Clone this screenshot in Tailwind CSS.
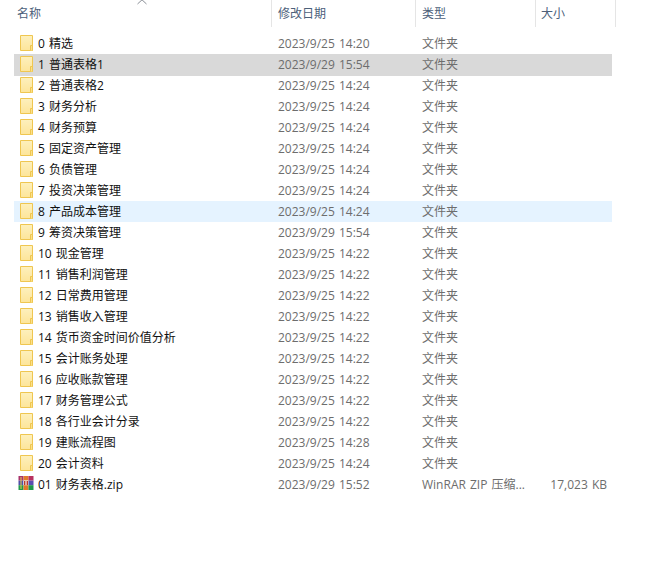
<!DOCTYPE html>
<html><head><meta charset="utf-8"><script src="https://cdn.jsdelivr.net/npm/@tailwindcss/browser@4"></script></head>
<body class="bg-white">
<div class="relative w-[672px] h-[570px] overflow-hidden bg-white text-[12px] [word-spacing:1px] font-['Open_Sans','Noto_Sans_CJK_SC',sans-serif]">
<svg class="absolute left-[137px] top-[-1px]" width="10" height="6" viewBox="0 0 10 6"><path d="M0.5 5 L5 0.8 L9.5 5" fill="none" stroke="#8a8f96" stroke-width="1"/></svg>
<div class="flex h-[27px] text-[#4c607a] leading-[27px]">
<div class="w-[272px] pl-[17px] border-r border-[#e5e5e5]">名称</div>
<div class="w-[144px] pl-[6px] border-r border-[#e5e5e5]">修改日期</div>
<div class="w-[120px] pl-[6px] border-r border-[#e5e5e5]">类型</div>
<div class="w-[80px] pl-[5px] border-r border-[#e5e5e5]">大小</div>
</div>
<svg width="0" height="0" class="absolute"><defs>
<linearGradient id="fg" x1="0" y1="0" x2="0" y2="1"><stop offset="0" stop-color="#fdf0bd"/><stop offset="1" stop-color="#fde59a"/></linearGradient>
<symbol id="folder" viewBox="0 0 16 16"><path d="M2.5 0.5H14.5V15.5H2.5Z" fill="url(#fg)" stroke="#efc650"/><path d="M12.5 15.5V10.5H14.5V15.5" fill="#fbe08a" stroke="#efc650"/></symbol>
</defs></svg>
<div class="pt-[6px] ml-[14px] w-[598px] flex flex-col text-[#6d6d6d]">
<div class="flex h-[21px] items-center"><div class="w-[264px] pl-[4px] flex items-center text-[#111]"><svg class="shrink-0 mr-[4px] mb-[1px]" width="16" height="16"><use href="#folder"/></svg><span>0 精选</span></div><div class="w-[144px]">2023/9/25 14:20</div><div>文件夹</div></div>
<div class="flex h-[22px] mb-[-1px] pb-[1px] items-center bg-[#d9d9d9]"><div class="w-[264px] pl-[4px] flex items-center text-[#111]"><svg class="shrink-0 mr-[4px] mb-[1px]" width="16" height="16"><use href="#folder"/></svg><span>1 普通表格1</span></div><div class="w-[144px]">2023/9/29 15:54</div><div>文件夹</div></div>
<div class="flex h-[21px] items-center"><div class="w-[264px] pl-[4px] flex items-center text-[#111]"><svg class="shrink-0 mr-[4px] mb-[1px]" width="16" height="16"><use href="#folder"/></svg><span>2 普通表格2</span></div><div class="w-[144px]">2023/9/25 14:24</div><div>文件夹</div></div>
<div class="flex h-[21px] items-center"><div class="w-[264px] pl-[4px] flex items-center text-[#111]"><svg class="shrink-0 mr-[4px] mb-[1px]" width="16" height="16"><use href="#folder"/></svg><span>3 财务分析</span></div><div class="w-[144px]">2023/9/25 14:24</div><div>文件夹</div></div>
<div class="flex h-[21px] items-center"><div class="w-[264px] pl-[4px] flex items-center text-[#111]"><svg class="shrink-0 mr-[4px] mb-[1px]" width="16" height="16"><use href="#folder"/></svg><span>4 财务预算</span></div><div class="w-[144px]">2023/9/25 14:24</div><div>文件夹</div></div>
<div class="flex h-[21px] items-center"><div class="w-[264px] pl-[4px] flex items-center text-[#111]"><svg class="shrink-0 mr-[4px] mb-[1px]" width="16" height="16"><use href="#folder"/></svg><span>5 固定资产管理</span></div><div class="w-[144px]">2023/9/25 14:24</div><div>文件夹</div></div>
<div class="flex h-[21px] items-center"><div class="w-[264px] pl-[4px] flex items-center text-[#111]"><svg class="shrink-0 mr-[4px] mb-[1px]" width="16" height="16"><use href="#folder"/></svg><span>6 负债管理</span></div><div class="w-[144px]">2023/9/25 14:24</div><div>文件夹</div></div>
<div class="flex h-[21px] items-center"><div class="w-[264px] pl-[4px] flex items-center text-[#111]"><svg class="shrink-0 mr-[4px] mb-[1px]" width="16" height="16"><use href="#folder"/></svg><span>7 投资决策管理</span></div><div class="w-[144px]">2023/9/25 14:24</div><div>文件夹</div></div>
<div class="flex h-[21px] items-center bg-[#e5f3ff]"><div class="w-[264px] pl-[4px] flex items-center text-[#111]"><svg class="shrink-0 mr-[4px] mb-[1px]" width="16" height="16"><use href="#folder"/></svg><span>8 产品成本管理</span></div><div class="w-[144px]">2023/9/25 14:24</div><div>文件夹</div></div>
<div class="flex h-[21px] items-center"><div class="w-[264px] pl-[4px] flex items-center text-[#111]"><svg class="shrink-0 mr-[4px] mb-[1px]" width="16" height="16"><use href="#folder"/></svg><span>9 筹资决策管理</span></div><div class="w-[144px]">2023/9/29 15:54</div><div>文件夹</div></div>
<div class="flex h-[21px] items-center"><div class="w-[264px] pl-[4px] flex items-center text-[#111]"><svg class="shrink-0 mr-[4px] mb-[1px]" width="16" height="16"><use href="#folder"/></svg><span>10 现金管理</span></div><div class="w-[144px]">2023/9/25 14:22</div><div>文件夹</div></div>
<div class="flex h-[21px] items-center"><div class="w-[264px] pl-[4px] flex items-center text-[#111]"><svg class="shrink-0 mr-[4px] mb-[1px]" width="16" height="16"><use href="#folder"/></svg><span>11 销售利润管理</span></div><div class="w-[144px]">2023/9/25 14:22</div><div>文件夹</div></div>
<div class="flex h-[21px] items-center"><div class="w-[264px] pl-[4px] flex items-center text-[#111]"><svg class="shrink-0 mr-[4px] mb-[1px]" width="16" height="16"><use href="#folder"/></svg><span>12 日常费用管理</span></div><div class="w-[144px]">2023/9/25 14:22</div><div>文件夹</div></div>
<div class="flex h-[21px] items-center"><div class="w-[264px] pl-[4px] flex items-center text-[#111]"><svg class="shrink-0 mr-[4px] mb-[1px]" width="16" height="16"><use href="#folder"/></svg><span>13 销售收入管理</span></div><div class="w-[144px]">2023/9/25 14:22</div><div>文件夹</div></div>
<div class="flex h-[21px] items-center"><div class="w-[264px] pl-[4px] flex items-center text-[#111]"><svg class="shrink-0 mr-[4px] mb-[1px]" width="16" height="16"><use href="#folder"/></svg><span>14 货币资金时间价值分析</span></div><div class="w-[144px]">2023/9/25 14:22</div><div>文件夹</div></div>
<div class="flex h-[21px] items-center"><div class="w-[264px] pl-[4px] flex items-center text-[#111]"><svg class="shrink-0 mr-[4px] mb-[1px]" width="16" height="16"><use href="#folder"/></svg><span>15 会计账务处理</span></div><div class="w-[144px]">2023/9/25 14:22</div><div>文件夹</div></div>
<div class="flex h-[21px] items-center"><div class="w-[264px] pl-[4px] flex items-center text-[#111]"><svg class="shrink-0 mr-[4px] mb-[1px]" width="16" height="16"><use href="#folder"/></svg><span>16 应收账款管理</span></div><div class="w-[144px]">2023/9/25 14:22</div><div>文件夹</div></div>
<div class="flex h-[21px] items-center"><div class="w-[264px] pl-[4px] flex items-center text-[#111]"><svg class="shrink-0 mr-[4px] mb-[1px]" width="16" height="16"><use href="#folder"/></svg><span>17 财务管理公式</span></div><div class="w-[144px]">2023/9/25 14:22</div><div>文件夹</div></div>
<div class="flex h-[21px] items-center"><div class="w-[264px] pl-[4px] flex items-center text-[#111]"><svg class="shrink-0 mr-[4px] mb-[1px]" width="16" height="16"><use href="#folder"/></svg><span>18 各行业会计分录</span></div><div class="w-[144px]">2023/9/25 14:22</div><div>文件夹</div></div>
<div class="flex h-[21px] items-center"><div class="w-[264px] pl-[4px] flex items-center text-[#111]"><svg class="shrink-0 mr-[4px] mb-[1px]" width="16" height="16"><use href="#folder"/></svg><span>19 建账流程图</span></div><div class="w-[144px]">2023/9/25 14:28</div><div>文件夹</div></div>
<div class="flex h-[21px] items-center"><div class="w-[264px] pl-[4px] flex items-center text-[#111]"><svg class="shrink-0 mr-[4px] mb-[1px]" width="16" height="16"><use href="#folder"/></svg><span>20 会计资料</span></div><div class="w-[144px]">2023/9/25 14:24</div><div>文件夹</div></div>
<div class="flex h-[21px] items-center"><div class="w-[264px] pl-[4px] flex items-center text-[#111]"><svg class="shrink-0 mr-[4px] mb-[3px]" width="16" height="16" viewBox="0 0 16 16"><rect x="0.5" y="1" width="5" height="4.6" fill="#a8326a"/><rect x="5.5" y="1" width="5" height="4.6" fill="#e27a2a"/><rect x="10.5" y="1" width="5" height="4.6" fill="#b8315f"/><rect x="0.5" y="5.6" width="5" height="4.6" fill="#4f4fa8"/><rect x="5.5" y="5.6" width="5" height="4.6" fill="#f4f1ea"/><rect x="10.5" y="5.6" width="5" height="4.6" fill="#5a4fb0"/><rect x="0.5" y="10.2" width="5" height="4.8" fill="#1f9a4a"/><rect x="5.5" y="10.2" width="5" height="4.8" fill="#e27a2a"/><rect x="10.5" y="10.2" width="5" height="4.8" fill="#1f9a4a"/><rect x="6" y="6" width="1.4" height="4" fill="#c0392b"/><rect x="8.6" y="6" width="1.4" height="4" fill="#c0392b"/><rect x="2.5" y="2" width="1" height="12" fill="#e8d24a"/></svg><span>01 财务表格.zip</span></div><div class="w-[144px]">2023/9/29 15:52</div><div class="w-[112px] whitespace-nowrap">WinRAR ZIP 压缩...</div><div class="w-[73px] text-right">17,023 KB</div></div>
</div>
</div>
</body></html>
